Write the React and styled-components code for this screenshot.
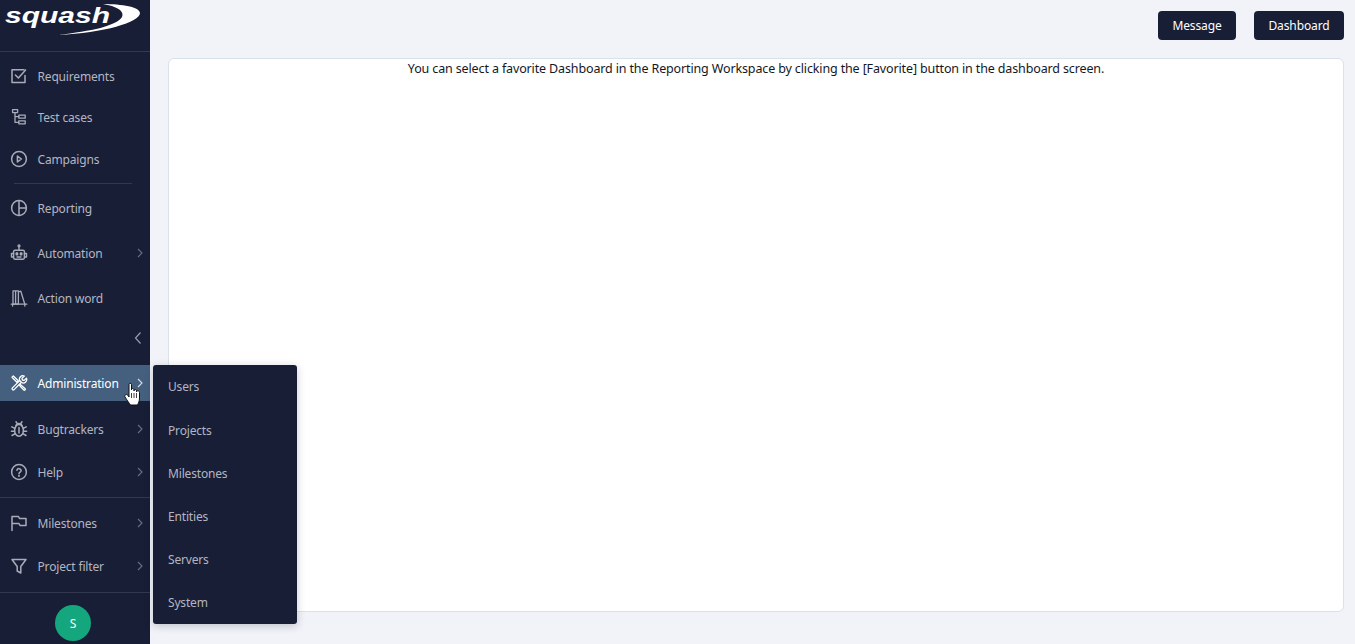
import React from "react";
import styled, { createGlobalStyle } from "styled-components";

const Global = createGlobalStyle`
  html, body { margin: 0; padding: 0; height: 100%; overflow: hidden; }
  #root { height: 100%; }
  * { box-sizing: border-box; }
  body { font-family: "Noto Sans", "Open Sans", sans-serif; font-size: 13px; background: #f1f3f8; }
`;

const Page = styled.div`
  display: flex;
  height: 644px;
  width: 1355px;
  background: #f1f3f8;
  position: relative;
`;

const Sidebar = styled.nav`
  width: 150px;
  flex: none;
  height: 100%;
  background: #191e37;
  display: flex;
  flex-direction: column;
  position: relative;
`;

const LogoBar = styled.div`
  height: 52px;
  flex: none;
  border-bottom: 1px solid #33384f;
  padding: 2px 0 0 4px;
`;

const Group = styled.div`
  display: flex;
  flex-direction: column;
  padding-top: ${(p) => p.$top || 0}px;
`;

const Rule = styled.div`
  height: 1px;
  background: #33384f;
  flex: none;
  margin: ${(p) => p.$margin};
`;

const Row = styled.div`
  height: ${(p) => p.$h || 42}px;
  margin-top: ${(p) => p.$mt || 0}px;
  flex: none;
  display: flex;
  align-items: center;
  padding-left: 10px;
  color: ${(p) => (p.$active ? "#ffffff" : "#b3b6c2")};
  background: ${(p) => (p.$active ? "#45607f" : "transparent")};
  position: relative;
`;

const IconBox = styled.span`
  width: 18px;
  height: 18px;
  flex: none;
  display: flex;
  align-items: center;
  justify-content: center;
  color: ${(p) => (p.$active ? "#ffffff" : "#a9acb8")};
  svg { display: block; }
`;

const Label = styled.span`
  margin-left: 9.5px;
  padding-top: 2px;
  font-size: 12px;
  letter-spacing: -0.17px;
  line-height: 18px;
  white-space: nowrap;
`;

const Chevron = styled.span`
  position: absolute;
  right: 6px;
  top: 50%;
  margin-top: -6px;
  width: 8px;
  height: 12px;
  color: ${(p) => (p.$active ? "#d6dbe4" : "#6a6e80")};
  svg { display: block; }
`;

const Collapse = styled.div`
  height: 22px;
  margin-top: 7px;
  flex: none;
  display: flex;
  justify-content: flex-end;
  align-items: center;
  padding-right: 8px;
  color: #9a9dab;
  svg { display: block; }
`;

const AvatarWrap = styled.div`
  flex: 1;
  display: flex;
  justify-content: center;
  padding: 12px 4px 0 0;
`;

const Avatar = styled.div`
  width: 36px;
  height: 36px;
  border-radius: 50%;
  background: #14a77e;
  color: #fff;
  font-size: 12px;
  display: flex;
  align-items: center;
  justify-content: center;
`;

const Main = styled.main`
  flex: 1;
  min-width: 0;
  padding: 11px 11px 32px 18px;
  display: flex;
  flex-direction: column;
`;

const TopBar = styled.div`
  display: flex;
  justify-content: flex-end;
  gap: 18px;
  margin-bottom: 18px;
`;

const Button = styled.button`
  height: 29px;
  width: ${(p) => p.$w}px;
  border: 0;
  border-radius: 4px;
  background: #191e37;
  color: #fff;
  font: 12px "Noto Sans", "Open Sans", sans-serif;
  letter-spacing: -0.12px;
  padding: 0 0 1px;
`;

const Panel = styled.section`
  flex: 1;
  background: #fff;
  border: 1px solid #d9e2ea;
  border-radius: 6px;
  text-align: center;
  color: #15171f;
  font-size: 12.5px;
  letter-spacing: -0.135px;
  line-height: 18px;
  padding-top: 1px;
`;

const Flyout = styled.div`
  position: absolute;
  left: 153px;
  top: 365px;
  width: 144px;
  height: 259px;
  background: #191e37;
  border-radius: 3px;
  box-shadow: 0 2px 8px rgba(20, 25, 50, 0.22);
  display: flex;
  flex-direction: column;
`;

const FlyItem = styled.div`
  height: 43px;
  flex: none;
  display: flex;
  align-items: center;
  padding-left: 15px;
  color: #b3b6c2;
  font-size: 12px;
  letter-spacing: -0.17px;
  &:first-child {
    height: 44px;
    padding-bottom: 1px;
  }
`;

const Cursor = styled.svg`
  position: absolute;
  left: 124px;
  top: 382px;
  z-index: 5;
`;

const Stroke = ({ children, size = 18, sw = 1.4 }) => (
  <svg width={size} height={size} viewBox="0 0 18 18" fill="none" stroke="currentColor" strokeWidth={sw} strokeLinecap="round" strokeLinejoin="round">
    {children}
  </svg>
);

const icons = {
  check: (
    <Stroke sw={1.5}>
      <path d="M15 8.500V15.500H2V2.800h12" />
      <path d="M5.400 8l3 3 7.200-8" />
    </Stroke>
  ),
  tree: (
    <Stroke sw={1.3}>
      <rect x="2.600" y="1.600" width="5" height="3" />
      <rect x="8.800" y="7.200" width="6.400" height="3" />
      <rect x="8.800" y="12.800" width="6.400" height="3" />
      <path d="M5 4.600v9.700h3.800M5 8.700h3.800" />
    </Stroke>
  ),
  play: (
    <Stroke sw={1.5}>
      <circle cx="9" cy="9" r="7.400" />
      <path d="M7.400 6l4 3-4 3z" />
    </Stroke>
  ),
  pie: (
    <Stroke sw={1.5}>
      <circle cx="9" cy="9" r="7.400" />
      <path d="M9 1.600v14.800M9 9h7.400" />
    </Stroke>
  ),
  robot: (
    <Stroke sw={1.4}>
      <circle cx="9" cy="1.800" r="0.900" />
      <path d="M9 2.800v3.400" />
      <rect x="3.600" y="6.200" width="10.800" height="9" rx="1.400" />
      <path d="M3.600 9.500H1.500v3.500h2.100M14.400 9.500h2.100v3.500h-2.100" />
      <rect x="6.200" y="9" width="1.400" height="1.800" fill="currentColor" />
      <rect x="10.400" y="9" width="1.400" height="1.800" fill="currentColor" />
      <path d="M7 13h4" />
    </Stroke>
  ),
  books: (
    <Stroke sw={1.3}>
      <path d="M3 1.800h2.600v13.400H3zM5.600 1.800h2.800v13.400H5.600zM8.400 2.800l2.400-.6 4 13" />
      <path d="M1.200 15.200h15.600M2.600 15.200V17M14.800 15.200V17" />
    </Stroke>
  ),
  tools: (
    <Stroke sw={1.3}>
      <path d="M2.400 13.900l7.300-7.300 1.700 1.700-7.300 7.300a1.200 1.200 0 0 1-1.700-1.700z" />
      <path d="M9.700 6.600a3.500 3.500 0 0 1 4.600-4.600l-2.300 2.300.4 1.700 1.700.4 2.300-2.300a3.500 3.500 0 0 1-4.600 4.600" />
      <path d="M2 3.300L3.300 2l5 4.800-1.400 1.400z" />
      <path d="M10.300 10.500l4.900 4.300c.5 1-.6 1.800-1.400 1.200L9.300 11.400" />
    </Stroke>
  ),
  bug: (
    <Stroke sw={1.5}>
      <ellipse cx="9" cy="10.400" rx="4.400" ry="5.800" />
      <path d="M6 5.600c.4-1.400 1.400-2.200 3-2.200s2.600.8 3 2.200" />
      <path d="M6 1.800l1.300 1.800M12 1.800l-1.300 1.800M9 7.500v5.500M1.800 6.800L4.800 8.400M16.200 6.800L13.200 8.400M1.400 11.200h3.200M16.600 11.200h-3.200M2 15.500l3.200-1.800M16 15.500l-3.200-1.800" />
    </Stroke>
  ),
  help: (
    <Stroke sw={1.5}>
      <circle cx="9" cy="9" r="7.400" />
      <path d="M6.900 7.200A2.200 2.200 0 0 1 11.200 7.600C11.200 9.100 9 9.300 9 10.800" />
      <circle cx="9" cy="12.900" r="0.300" />
    </Stroke>
  ),
  flag: (
    <Stroke sw={1.5}>
      <path d="M2 16.500V2.500h6.500l1 2h6.500v7H10l-1-2H2" />
    </Stroke>
  ),
  filter: (
    <Stroke sw={1.5}>
      <path d="M2 2.500h14L10.800 9.500V16L7.200 14V9.500z" />
    </Stroke>
  ),
};

const ChevronRight = () => (
  <svg width="8" height="12" viewBox="0 0 8 12" fill="none" stroke="currentColor" strokeWidth="1.100">
    <path d="M2 2l4 4-4 4" />
  </svg>
);

const NavRow = ({ icon, label, h, mt, chevron, active }) => (
  <Row $h={h} $mt={mt} $active={active}>
    <IconBox $active={active}>{icons[icon]}</IconBox>
    <Label>{label}</Label>
    {chevron && (
      <Chevron $active={active}>
        <ChevronRight />
      </Chevron>
    )}
  </Row>
);

const Logo = () => (
  <svg width="140" height="38" viewBox="0 0 140 38">
    <text
      x="1"
      y="21"
      fill="#ffffff"
      fontFamily="Liberation Sans, Arial, sans-serif"
      fontWeight="700"
      fontStyle="italic"
      fontSize="22"
      textLength="105"
      lengthAdjust="spacingAndGlyphs"
    >
      squash
    </text>
    <path d="M99 2C118 2 136 5 136 11C136 20 100 31 54 33C88 29 112 24 118 15C121 9 112 4 99 2Z" fill="#ffffff" />
  </svg>
);

export default function App() {
  return (
    <Page>
      <Global />
      <Sidebar>
        <LogoBar>
          <Logo />
        </LogoBar>
        <Group $top={3}>
          <NavRow icon="check" label="Requirements" />
          <NavRow icon="tree" label="Test cases" h={40} />
          <NavRow icon="play" label="Campaigns" mt={1} />
        </Group>
        <Rule $margin="3px 18px 3px 14px" />
        <Group>
          <NavRow icon="pie" label="Reporting" />
          <NavRow icon="robot" label="Automation" chevron h={45} mt={1} />
          <NavRow icon="books" label="Action word" h={45} />
        </Group>
        <Collapse>
          <svg width="8" height="14" viewBox="0 0 8 14" fill="none" stroke="currentColor" strokeWidth="1.200">
            <path d="M6.500 1.500L1.500 7l5 5.500" />
          </svg>
        </Collapse>
        <Group $top={16}>
          <NavRow icon="tools" label="Administration" chevron active h={36} />
          <NavRow icon="bug" label="Bugtrackers" chevron mt={7} />
          <NavRow icon="help" label="Help" chevron h={43} />
        </Group>
        <Rule $margin="4px 0 4px" />
        <Group>
          <NavRow icon="flag" label="Milestones" chevron />
          <NavRow icon="filter" label="Project filter" chevron h={43} />
        </Group>
        <Rule $margin="5px 0 0" />
        <AvatarWrap>
          <Avatar>S</Avatar>
        </AvatarWrap>
      </Sidebar>
      <Main>
        <TopBar>
          <Button $w={78}>Message</Button>
          <Button $w={90}>Dashboard</Button>
        </TopBar>
        <Panel>You can select a favorite Dashboard in the Reporting Workspace by clicking the [Favorite] button in the dashboard screen.</Panel>
      </Main>
      <Flyout>
        {["Users", "Projects", "Milestones", "Entities", "Servers", "System"].map((t) => (
          <FlyItem key={t}>{t}</FlyItem>
        ))}
      </Flyout>
      <Cursor width="18" height="24" viewBox="0 0 18 24">
        <path
          d="M5 2.500C5 1 7.500 1 7.500 2.500V8C7.500 6 10 6 10 7.800V9C10 7 12.500 7 12.500 8.800V10C12.500 8.200 15.500 8.400 15.500 10.500V16C15.500 19 14.500 21 13.500 23H6.500C5 21 3 18 1 15C0 13 2.500 11.500 4 13.500L5 15Z"
          fill="#ffffff"
          stroke="#111"
          strokeWidth="1"
          strokeLinejoin="round"
        />
        <path d="M7.500 11v5M10 11v5M12.500 11v5" stroke="#111" strokeWidth="0.800" />
      </Cursor>
    </Page>
  );
}
